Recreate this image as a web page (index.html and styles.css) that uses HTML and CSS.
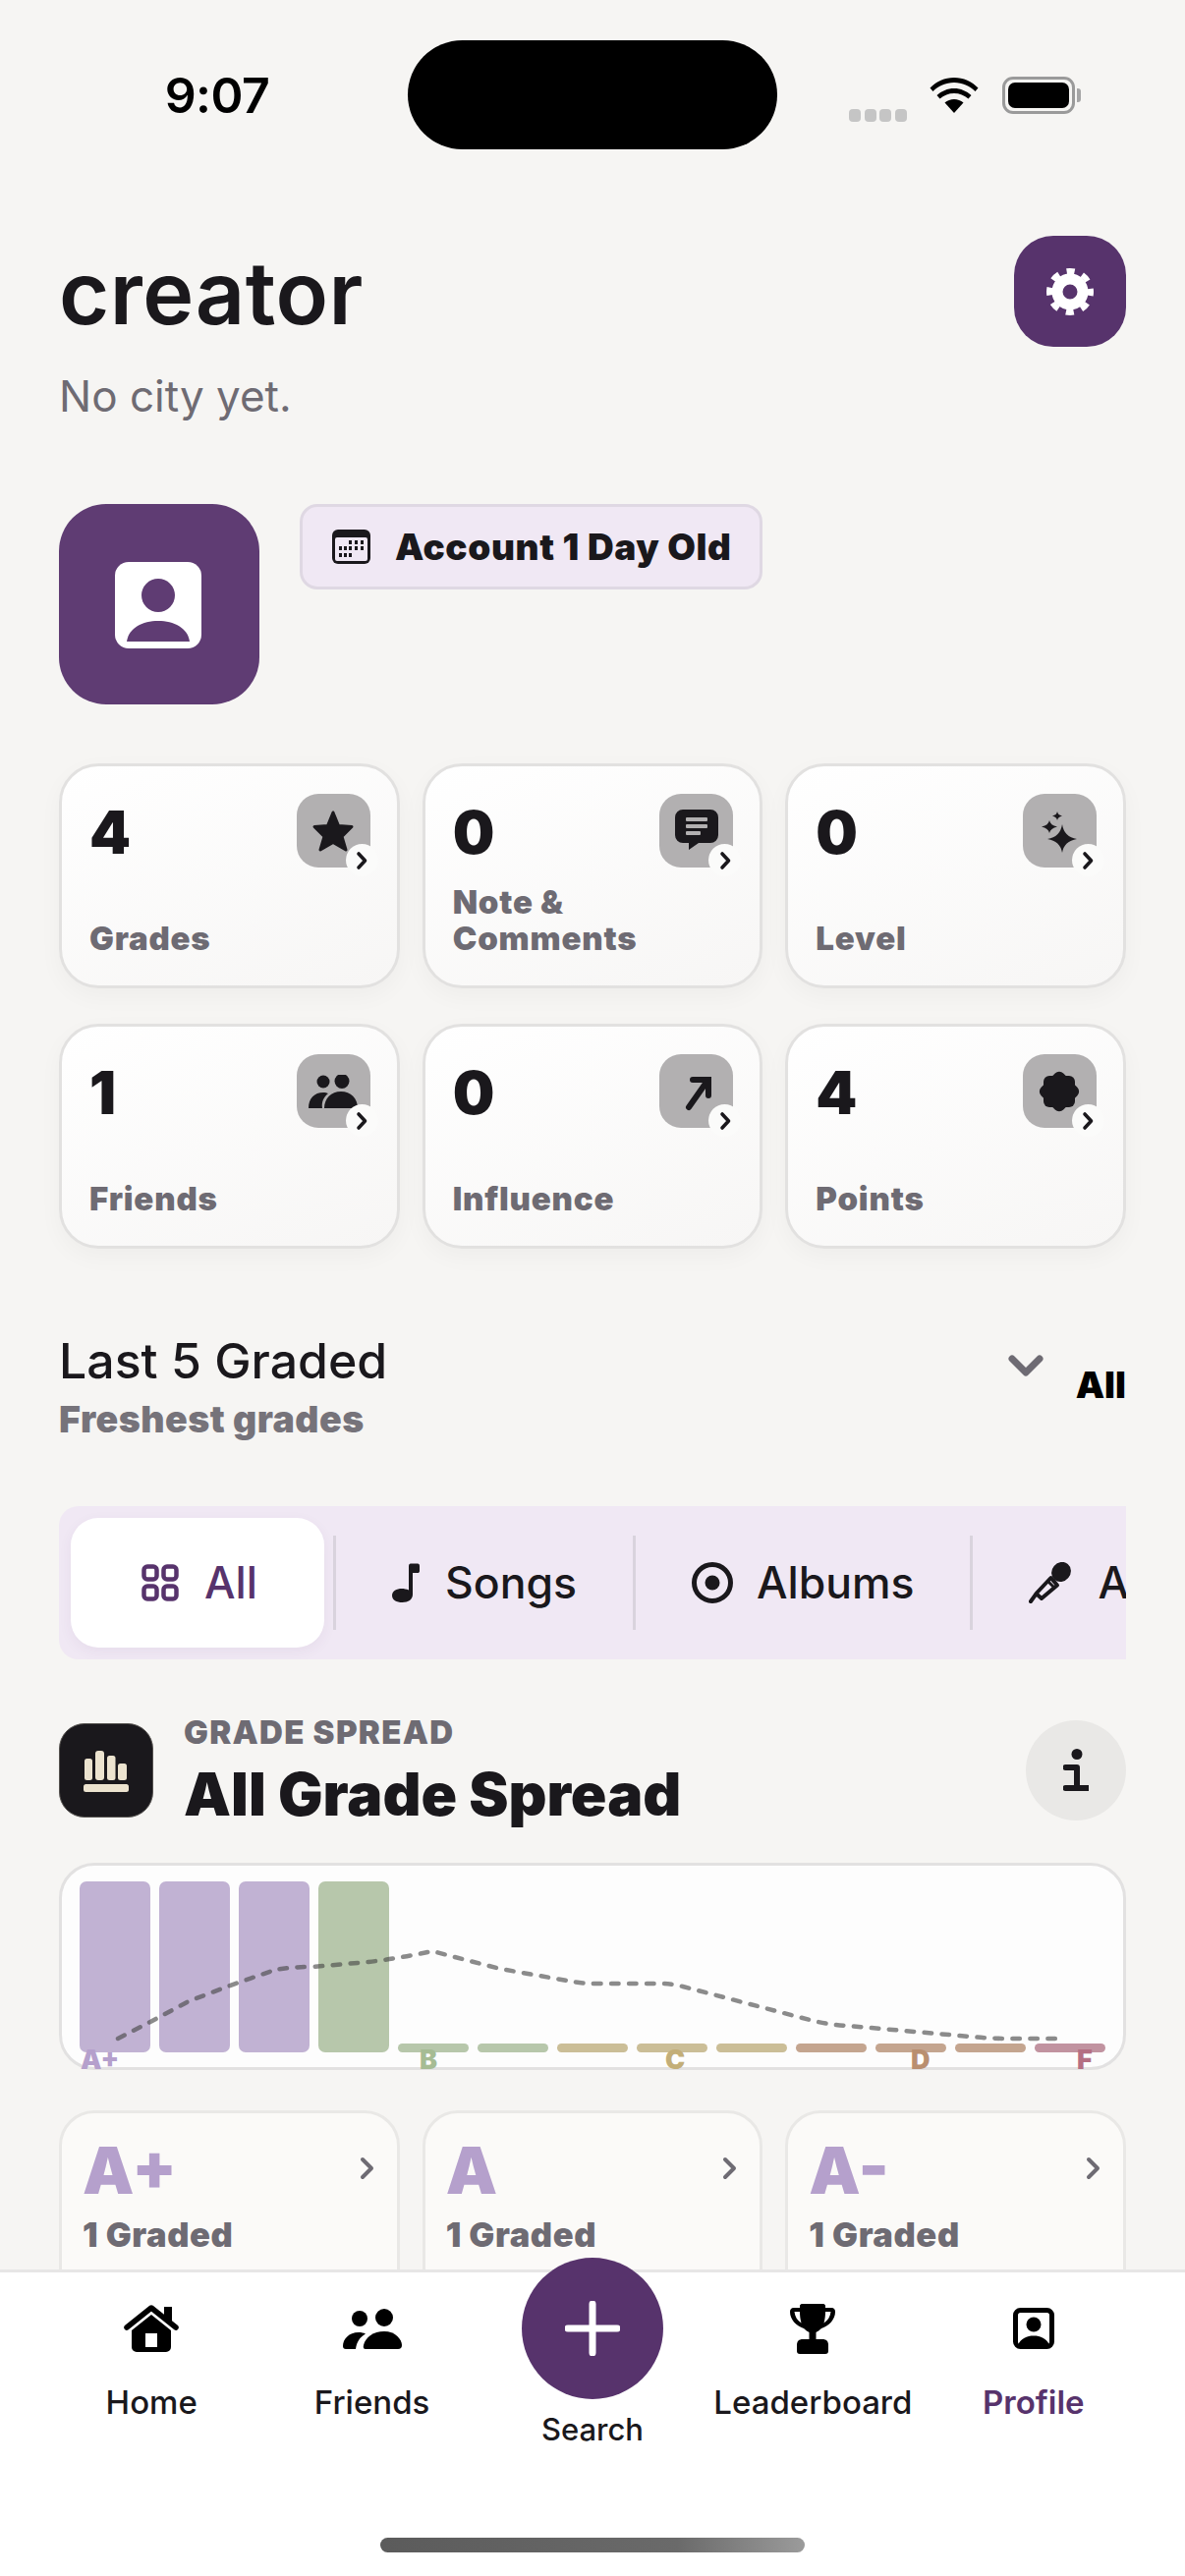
FILE: index.html
```html
<!DOCTYPE html>
<html lang="en">
<head>
<meta charset="utf-8">
<title>Profile</title>
<link rel="stylesheet" href="styles.css">
</head>
<body>
<div class="page">
  <main class="content">
    <div class="status">
      <div class="time-wrap"><span class="time">9:07</span></div>
      <div class="island"></div>
      <div class="status-right">
        <span class="dots"><i></i><i></i><i></i><i></i></span>
        <svg class="wifi" viewBox="0 0 50 37"><path d="M25 6C33.500 6 41 9.500 46.500 15L49.500 11.500C43 5 34.500 1 25 1S7 5 .5 11.500L3.500 15C9 9.500 16.500 6 25 6Z" /><path d="M25 17C30.500 17 35.500 19 39.500 22.500L42.500 19C37.800 14.700 31.700 12 25 12S12.200 14.700 7.500 19L10.500 22.500C14.500 19 19.500 17 25 17Z"/><path d="M25 23C21.500 23 18.200 24.300 15.500 26.500L25 37L34.500 26.500C31.800 24.300 28.500 23 25 23Z"/></svg>
        <span class="battery"><i></i></span><span class="nub"></span>
      </div>
    </div>

    <header class="head">
      <div>
        <h1 class="name">creator</h1>
        <p class="city">No city yet.</p>
      </div>
      <button class="gear-btn">
        <svg viewBox="0 0 50 50" class="gear"><circle cx="25" cy="25" r="21" fill="none" stroke="#fff" stroke-width="6" stroke-dasharray="8.200 8.290" stroke-dashoffset="4.100"/><circle cx="25" cy="25" r="13" fill="none" stroke="#fff" stroke-width="11"/></svg>
      </button>
    </header>

    <section class="identity">
      <div class="avatar">
        <svg viewBox="0 0 88 88" class="avatar-icon"><rect width="88" height="88" rx="14" fill="#fff"/><circle cx="44" cy="34" r="17" fill="#5f3c73"/><path d="M12 81C14 67 28 60 44 60S74 67 76 81Z" fill="#5f3c73"/></svg>
      </div>
      <div class="age-badge">
        <svg viewBox="0 0 39 35" class="cal"><rect width="39" height="35" rx="6" fill="#1a181c"/><rect x="3" y="8" width="33" height="24" rx="2" fill="#f0e8f4"/><g fill="#1a181c"><rect x="17" y="11" width="3" height="4"/><rect x="23" y="11" width="3" height="4"/><rect x="29" y="11" width="3" height="4"/><rect x="7" y="17" width="3" height="4"/><rect x="12" y="17" width="3" height="4"/><rect x="17" y="17" width="3" height="4"/><rect x="23" y="17" width="3" height="4"/><rect x="29" y="17" width="3" height="4"/><rect x="7" y="24" width="3" height="4"/><rect x="12" y="24" width="3" height="4"/><rect x="17" y="24" width="3" height="4"/></g></svg>
        <span>Account 1 Day Old</span>
      </div>
    </section>

    <section class="stats">
      <article class="stat">
        <div class="stat-top"><span class="num">4</span>
          <span class="stat-icon"><svg viewBox="0 0 44 44"><path d="M22 3L27.500 16.500L41 17.500L31 27.500L35 41L22 33.500L9 41L13 27.500L3 17.500L16.500 16.500Z" fill="#1a181c" stroke="#1a181c" stroke-width="3" stroke-linejoin="round"/></svg><b class="go"><svg viewBox="0 0 14 20"><path d="M4 3L10.500 10L4 17"/></svg></b></span></div>
        <span class="label">Grades</span>
      </article>
      <article class="stat">
        <div class="stat-top"><span class="num">0</span>
          <span class="stat-icon"><svg viewBox="0 0 44 44"><path d="M8 0H36A8 8 0 0 1 44 8V26A8 8 0 0 1 36 34H24L14 41V34H8A8 8 0 0 1 0 26V8A8 8 0 0 1 8 0Z" fill="#1a181c"/><g fill="#b2b0b1"><rect x="11" y="8" width="22" height="4" rx="1"/><rect x="11" y="15" width="22" height="4" rx="1"/><rect x="11" y="22" width="15" height="4" rx="1"/></g></svg><b class="go"><svg viewBox="0 0 14 20"><path d="M4 3L10.500 10L4 17"/></svg></b></span></div>
        <span class="label">Note &amp;<br>Comments</span>
      </article>
      <article class="stat">
        <div class="stat-top"><span class="num">0</span>
          <span class="stat-icon"><svg viewBox="0 0 44 44" fill="#1a181c"><path d="M25 15Q27 28 40 30Q27 32 25 44Q23 32 10 30Q23 28 25 15Z"/><path d="M12 11Q13 16 20 17.500Q13 19 12 24Q11 19 4 17.500Q11 16 12 11Z"/><path d="M20 2Q20.500 5.500 25 6.500Q20.500 7.500 20 11Q19.500 7.500 15 6.500Q19.500 5.500 20 2Z"/></svg><b class="go"><svg viewBox="0 0 14 20"><path d="M4 3L10.500 10L4 17"/></svg></b></span></div>
        <span class="label">Level</span>
      </article>
      <article class="stat">
        <div class="stat-top"><span class="num">1</span>
          <span class="stat-icon"><svg viewBox="0 0 50 34" class="wide"><g fill="#1a181c"><circle cx="15" cy="7" r="6.500"/><circle cx="34" cy="6.500" r="7.500"/><path d="M0 34C0 24 6 18 15 18C17 18 19 18.500 20 19C15 23 13 28 14 34Z"/><path d="M16 34C16 24 23 17 33 17S50 24 50 34Z"/></g></svg><b class="go"><svg viewBox="0 0 14 20"><path d="M4 3L10.500 10L4 17"/></svg></b></span></div>
        <span class="label">Friends</span>
      </article>
      <article class="stat">
        <div class="stat-top"><span class="num">0</span>
          <span class="stat-icon"><svg viewBox="0 0 44 44"><path d="M18 10H34V26M33 11L14 38" fill="none" stroke="#1a181c" stroke-width="6" stroke-linecap="round"/></svg><b class="go"><svg viewBox="0 0 14 20"><path d="M4 3L10.500 10L4 17"/></svg></b></span></div>
        <span class="label">Influence</span>
      </article>
      <article class="stat">
        <div class="stat-top"><span class="num">4</span>
          <span class="stat-icon"><svg viewBox="0 0 44 44" fill="#1a181c"><rect x="6" y="6" width="32" height="32" rx="6"/><rect x="6" y="6" width="32" height="32" rx="6" transform="rotate(45 22 22)"/></svg><b class="go"><svg viewBox="0 0 14 20"><path d="M4 3L10.500 10L4 17"/></svg></b></span></div>
        <span class="label">Points</span>
      </article>
    </section>

    <section class="last">
      <div>
        <h2 class="last-title">Last 5 Graded</h2>
        <p class="last-sub">Freshest grades</p>
      </div>
      <div class="filter">
        <svg viewBox="0 0 36 22" class="filter-chev"><path d="M4 4L18 18L32 4" /></svg>
        <span>All</span>
      </div>
    </section>

    <nav class="tabs">
      <div class="tab active">
        <svg viewBox="0 0 38 38" class="tab-icon"><g fill="none" stroke="#57336c" stroke-width="4.500"><rect x="2.500" y="2.500" width="13" height="13" rx="3.500"/><rect x="22.500" y="2.500" width="13" height="13" rx="3.500"/><rect x="2.500" y="22.500" width="13" height="13" rx="3.500"/><rect x="22.500" y="22.500" width="13" height="13" rx="3.500"/></g></svg>
        <span>All</span>
      </div>
      <i class="sep"></i>
      <div class="tab">
        <svg viewBox="0 0 28 40" class="tab-icon note"><path d="M17 3C17 1 18 .5 20 .5H26C27.500 .5 28 1.500 28 3V8C28 9.500 27 10 26 10H21V32C21 37 16.500 40 10.500 40C4.500 40 0 37.500 0 33C0 28.500 4.500 26 10 26C12 26 15 26.500 17 27.500Z" fill="#1a181c"/></svg>
        <span>Songs</span>
      </div>
      <i class="sep"></i>
      <div class="tab">
        <svg viewBox="0 0 42 42" class="tab-icon disc"><circle cx="21" cy="21" r="18.500" fill="none" stroke="#1a181c" stroke-width="5"/><circle cx="21" cy="21" r="7.500" fill="#1a181c"/></svg>
        <span>Albums</span>
      </div>
      <i class="sep"></i>
      <div class="tab">
        <svg viewBox="0 0 44 42" class="tab-icon mic"><ellipse cx="33" cy="10" rx="9.500" ry="10.500" fill="#1a181c" transform="rotate(40 33 10)"/><path d="M22.500 16L29 23.500L13 37L7.500 32Z" fill="none" stroke="#1a181c" stroke-width="4" stroke-linejoin="round"/><path d="M19 19L27 27" stroke="#1a181c" stroke-width="3"/><path d="M7 33L2 40" stroke="#1a181c" stroke-width="4" stroke-linecap="round"/></svg>
        <span>Artists</span>
      </div>
    </nav>

    <section class="spread-head">
      <div class="spread-icon">
        <svg viewBox="0 0 46 42"><g fill="#ece3cf"><rect x="1" y="8" width="8" height="22" rx="2.500"/><rect x="12" y="0" width="9" height="30" rx="3"/><rect x="24" y="5" width="8.500" height="25" rx="2.500"/><rect x="35" y="13" width="9" height="17" rx="2.500"/><rect x="0" y="34" width="46" height="8" rx="2.500"/></g></svg>
      </div>
      <div class="spread-text">
        <p class="eyebrow">GRADE SPREAD</p>
        <h2 class="spread-title">All Grade Spread</h2>
      </div>
      <button class="info">
        <svg viewBox="0 0 26 46" class="info-i"><circle cx="14" cy="5.500" r="5.500" fill="#1a181c"/><path d="M2.500 19H14V40H2.500H25" fill="none" stroke="#1a181c" stroke-width="6" stroke-linecap="round" stroke-linejoin="round"/></svg>
      </button>
    </section>

    <section class="chart">
      <div class="bars">
        <i class="bar tall c-a"></i><i class="bar tall c-a"></i><i class="bar tall c-a"></i><i class="bar tall c-b"></i>
        <i class="bar c-b"></i><i class="bar c-b"></i>
        <i class="bar c-c"></i><i class="bar c-c"></i><i class="bar c-c"></i>
        <i class="bar c-d"></i><i class="bar c-d"></i><i class="bar c-d"></i>
        <i class="bar c-f"></i>
      </div>
      <div class="axis">
        <span class="t-a">A+</span><span class="t-b">B</span><span class="t-c">C</span><span class="t-d">D</span><span class="t-f">F</span>
      </div>
      <svg class="trend" viewBox="0 0 1081 205"><path d="M57 176L90 159L129 138L171 122L217 106Q232 103 255 103L312 98Q345 94 377 87L446 105L520 118Q530 120 545 120L610 120Q621 120 632 123L765 158Q782 162 800 163L925 174Q945 176 965 176L1015 176"/></svg>
    </section>

    <section class="grades">
      <article class="grade">
        <div class="grade-top"><span class="grade-letter">A+</span><svg viewBox="0 0 16 24" class="grade-chev"><path d="M3 3L12 12L3 21"/></svg></div>
        <span class="grade-count">1 Graded</span>
      </article>
      <article class="grade">
        <div class="grade-top"><span class="grade-letter">A</span><svg viewBox="0 0 16 24" class="grade-chev"><path d="M3 3L12 12L3 21"/></svg></div>
        <span class="grade-count">1 Graded</span>
      </article>
      <article class="grade">
        <div class="grade-top"><span class="grade-letter">A-</span><svg viewBox="0 0 16 24" class="grade-chev"><path d="M3 3L12 12L3 21"/></svg></div>
        <span class="grade-count">1 Graded</span>
      </article>
    </section>
  </main>

  <footer class="tabbar">
    <div class="items">
      <div class="item">
        <span class="item-icon"><svg viewBox="0 0 56 50" class="i-home"><path d="M3 24L28 4L53 24" fill="none" stroke="#000" stroke-width="5.500" stroke-linecap="round" stroke-linejoin="round"/><path d="M41 3H49V20L41 13Z" fill="#000"/><path fill-rule="evenodd" d="M28 11L48 27V44A5 5 0 0 1 43 49H13A5 5 0 0 1 8 44V27ZM22 30V44H34V30Z" fill="#000"/></svg></span>
        <span class="item-label">Home</span>
      </div>
      <div class="item">
        <span class="item-icon"><svg viewBox="0 0 60 41" class="i-friends"><g fill="#000"><circle cx="17" cy="10" r="8"/><circle cx="42" cy="9" r="9"/><path d="M0 38C0 31 6 24 16 24C19 24 21 24.500 23 25.500C17 29 14 34 13 41H3C1 41 0 40 0 38Z"/><path d="M23 41Q20 41 21 37C23 29 31 23 42 23C53 23 60 31 60 37Q60 41 56 41Z"/></g></svg></span>
        <span class="item-label">Friends</span>
      </div>
      <div class="item search">
        <span class="fab"><svg viewBox="0 0 56 56"><path d="M28 3V53M3 28H53" fill="none" stroke="#fff" stroke-width="7" stroke-linecap="round"/></svg></span>
        <span class="item-label small">Search</span>
      </div>
      <div class="item">
        <span class="item-icon"><svg viewBox="0 0 46 51" class="i-trophy"><path d="M12 0H34C35 0 36 1 36 2V4H42C45 4 46 6 46 8C46 16 40 22 32 25C30 27 28 28 26.500 29V36H33C37 36 39 38 39 42V48C39 50 38 51 36 51H10C8 51 7 50 7 48V42C7 38 9 36 13 36H19.500V29C18 28 16 27 14 25C6 22 0 16 0 8C0 6 1 4 4 4H10V2C10 1 11 0 12 0ZM4.500 8C5 13 7.500 17 11.500 19.500C10.500 16 10 12 10 8ZM41.500 8H36C36 12 35.500 16 34.500 19.500C38.500 17 41 13 41.500 8Z" fill="#000" fill-rule="evenodd"/></svg></span>
        <span class="item-label">Leaderboard</span>
      </div>
      <div class="item active-item">
        <span class="item-icon"><svg viewBox="0 0 42 42" class="i-profile"><rect x="2.500" y="2.500" width="37" height="37" rx="5" fill="none" stroke="#000" stroke-width="5"/><circle cx="21" cy="17" r="7.500" fill="#000"/><path d="M5 38C8 31 14 28.500 21 28.500S34 31 37 38Z" fill="#000"/></svg></span>
        <span class="item-label">Profile</span>
      </div>
    </div>
    <div class="home-bar"></div>
  </footer>
</div>
</body>
</html>
```

FILE: styles.css
```css
* { box-sizing: border-box; margin: 0; padding: 0; }
html, body { width: 1206px; height: 2622px; overflow: hidden; }
body { font-family: Inter, "Liberation Sans", sans-serif; background: #f6f5f3; color: #1a181c; }
button { border: 0; font: inherit; }
i { font-style: normal; display: block; }

.page { width: 1206px; height: 2622px; display: flex; flex-direction: column; }
.content { height: 2310px; overflow: hidden; padding: 0 60px; flex: none; }

/* status bar */
.status { display: flex; height: 240px; margin: 0 -60px; padding: 41px 0 0 0; align-items: flex-start; }
.time-wrap { width: 415px; padding: 32px 0 0 136px; }
.time { display: block; width: 170px; font-size: 50px; font-weight: 600; line-height: 48px; color: #000; letter-spacing: -.5px; text-align: center; }
.island { width: 376px; height: 111px; border-radius: 56px; background: #000; flex: none; }
.status-right { position: relative; display: flex; align-items: center; height: 111px; padding-left: 73px; flex: 1; }
.dots { display: flex; gap: 3.500px; margin-top: 42px; }
.dots i { width: 12px; height: 13px; border-radius: 4px; background: #c5c5c5; }
.wifi { width: 50px; height: 37px; margin: 0 0 0 23px; fill: #000; }
.battery { width: 74px; height: 38px; margin-left: 24px; border: 3px solid #9a9a9a; border-radius: 11px; padding: 3px; display: block; }
.battery i { width: 100%; height: 100%; border-radius: 7px; background: #000; }
.nub { width: 4px; height: 14px; margin-left: 2px; border-radius: 0 3px 3px 0; background: #a5a5a5; }

/* header */
.head { display: flex; justify-content: space-between; align-items: flex-start; height: 273px; }
.name { font-size: 88px; font-weight: 600; line-height: 100px; letter-spacing: .5px; color: #1a181c; margin-top: 8px; }
.city { font-size: 44px; font-weight: 400; line-height: 56px; color: #6e6b73; margin-top: 27px; }
.gear-btn { width: 114px; height: 113px; border-radius: 40px; background: #57336c; display: flex; align-items: center; justify-content: center; }
.gear { width: 50px; height: 50px; }

/* identity */
.identity { display: flex; gap: 41px; align-items: flex-start; height: 264px; }
.avatar { width: 204px; height: 204px; border-radius: 48px; background: #5f3c73; display: flex; align-items: center; justify-content: center; flex: none; }
.avatar-icon { width: 88px; height: 88px; margin: 2px 0 0 -3px; }
.age-badge { height: 87px; display: flex; align-items: center; gap: 25px; padding: 0 28px 0 30px; border-radius: 18px; background: #f0e8f4; border: 3px solid #dfd8e3; font-size: 37px; font-weight: 900; line-height: 44px; letter-spacing: .6px; }
.cal { width: 39px; height: 35px; flex: none; }

/* stats */
.stats { display: grid; grid-template-columns: repeat(3, 1fr); grid-auto-rows: 229px; column-gap: 23px; row-gap: 36px; }
.stat { display: flex; flex-direction: column; padding: 28px 27px 29px 28px; border: 3px solid #e2e1e0; border-radius: 40px; background: linear-gradient(160deg, #ffffff 0%, #f7f6f5 100%); box-shadow: 0 8px 24px rgba(0, 0, 0, .035); }
.stat-top { display: flex; justify-content: space-between; align-items: flex-start; }
.num { font-size: 60px; font-weight: 900; line-height: 60px; margin-top: 9px; color: #1a181c; }
.stat-icon { position: relative; width: 75px; height: 75px; border-radius: 22px; background: #b2b0b1; display: flex; align-items: center; justify-content: center; }
.stat-icon > svg { width: 44px; height: 44px; }
.stat-icon > svg.wide { width: 50px; height: 34px; }
.go { position: absolute; right: -8px; bottom: -9px; width: 33px; height: 33px; border-radius: 50%; background: #fbfbfa; display: flex; align-items: center; justify-content: center; }
.go svg { width: 14px; height: 20px; fill: none; stroke: #1a181c; stroke-width: 3.600; stroke-linecap: round; stroke-linejoin: round; }
.label { margin-top: auto; font-size: 33px; font-weight: 900; line-height: 37px; letter-spacing: .8px; color: #6e6b73; }

/* last graded */
.last { display: flex; justify-content: space-between; align-items: flex-start; margin-top: 84px; height: 178px; }
.last-title { font-size: 50px; font-weight: 500; line-height: 62px; color: #1a181c; margin-top: -1px; }
.last-sub { font-size: 37.500px; font-weight: 900; line-height: 44px; letter-spacing: .45px; color: #76737a; margin-top: 7px; }
.filter { display: flex; align-items: flex-start; gap: 33px; font-size: 37px; font-weight: 900; color: #000; line-height: 40px; padding-top: 40px; }
.filter span { margin-top: -5px; }
.filter-chev { width: 36px; height: 22px; margin-top: -16px; fill: none; stroke: #6e6b73; stroke-width: 7; stroke-linecap: round; stroke-linejoin: round; }

/* tabs */
.tabs { height: 156px; display: flex; align-items: center; padding-left: 12px; background: #f0e8f4; border-radius: 20px 0 0 20px; overflow: hidden; font-size: 44.500px; font-weight: 500; color: #1a181c; }
.tab { display: flex; align-items: center; height: 132px; padding: 0 57px; gap: 26px; white-space: nowrap; flex: none; }
.tab.active { width: 258px; padding: 0 0 0 72px; background: #fff; border-radius: 28px; color: #57336c; box-shadow: 0 4px 14px rgba(87, 51, 108, .06); margin-right: 9px; }
.sep { width: 3px; height: 96px; background: #d9d3dd; flex: none; }
.tab-icon { width: 38px; height: 38px; flex: none; }
.tab-icon.note { width: 28px; height: 40px; }
.tab-icon.disc { width: 42px; height: 42px; margin-right: -2px; }
.tab-icon.mic { width: 44px; height: 42px; }

/* spread header */
.spread-head { display: flex; align-items: flex-start; margin-top: 62px; height: 145px; }
.spread-icon { width: 96px; height: 96px; margin-top: 3px; border-radius: 26px; background: #1a181c; border: 1px solid #55524f; display: flex; align-items: center; justify-content: center; flex: none; }
.spread-icon svg { width: 46px; height: 42px; margin-top: 2px; }
.spread-text { margin-left: 31px; flex: 1; }
.eyebrow { font-size: 33px; font-weight: 900; line-height: 36px; letter-spacing: 1.300px; color: #6e6b73; margin-top: -6px; }
.spread-title { font-size: 60.500px; font-weight: 900; line-height: 70px; margin-top: 10px; }
.info { width: 102px; height: 102px; border-radius: 50%; background: #e9e8e6; display: flex; align-items: center; justify-content: center; flex: none; }
.info-i { width: 26px; height: 46px; margin-top: 2px; }

/* chart */
.chart { position: relative; height: 211px; border: 3px solid #e2e1e1; border-radius: 36px; background: #fdfdfd; padding: 16px 0 0 18px; }
.bars { display: flex; align-items: flex-end; gap: 9px; height: 174px; }
.bar { width: 72px; height: 9px; border-radius: 5px; flex: none; }
.bar.tall { height: 174px; border-radius: 7px; }
.c-a { background: #c1b2d3; }
.c-b { background: #b7c7ab; }
.c-c { background: #cbbe97; }
.c-d { background: #c4a58f; }
.c-f { background: #c193a0; }
.axis { display: grid; grid-template-columns: 345px 250px 250px 169px auto; margin-top: -4px; font-size: 27px; font-weight: 900; line-height: 24px; padding-left: 1px; }
.t-a { color: #b5a0cc; }
.t-b { color: #a6bc94; }
.t-c { color: #c3ae78; }
.t-d { color: #b98f70; }
.t-f { color: #b46f83; }
.trend { position: absolute; left: 0; top: 0; width: 1081px; height: 205px; fill: none; stroke: #454545; stroke-opacity: .62; stroke-width: 4.500; stroke-linecap: round; stroke-dasharray: 7.500 10.500; }

/* grade cards */
.grades { display: grid; grid-template-columns: repeat(3, 1fr); column-gap: 23px; margin-top: 41px; }
.grade { height: 229px; padding: 23px 24px 0 21px; border: 3px solid #e9e8e6; border-radius: 36px; background: #fbfaf8; }
.grade-top { display: flex; justify-content: space-between; align-items: flex-start; }
.grade-letter { font-size: 66px; font-weight: 900; line-height: 70px; color: #b5a0cc; }
.grade-chev { width: 16px; height: 24px; margin-top: 21px; margin-right: -2px; fill: none; stroke: #6e6b73; stroke-width: 4; stroke-linecap: round; stroke-linejoin: round; }
.grade-count { display: block; margin-top: 10px; font-size: 34.500px; font-weight: 900; line-height: 42px; letter-spacing: .6px; color: #6e6b73; }

/* tab bar */
.tabbar { flex: 1; display: flex; flex-direction: column; position: relative; background: #fff; border-top: 3px solid #e7e6e6; }
.items { display: grid; grid-template-columns: repeat(5, 224.400px); padding-left: 42px; }
.item { display: flex; flex-direction: column; align-items: center; }
.item-icon { display: flex; align-items: center; justify-content: center; height: 60px; margin-top: 27px; }
.i-home { width: 56px; height: 50px; }
.i-friends { width: 60px; height: 41px; }
.i-trophy { width: 46px; height: 51px; }
.i-profile { width: 42px; height: 42px; }
.item-label { margin-top: 25px; font-size: 33px; font-weight: 500; line-height: 40px; color: #1a181c; white-space: nowrap; }
.item-label.small { margin-top: 11px; font-size: 31px; }
.active-item .item-label { color: #57336c; font-weight: 600; }
.fab { width: 144px; height: 144px; margin-top: -15px; border-radius: 50%; background: #57336c; display: flex; align-items: center; justify-content: center; }
.fab svg { width: 56px; height: 56px; }
.home-bar { width: 432px; height: 15px; margin: auto auto 24px; border-radius: 8px; background: linear-gradient(90deg, #5b5b5b 0%, #6a6a6a 70%, #9b9b9b 100%); }
```
